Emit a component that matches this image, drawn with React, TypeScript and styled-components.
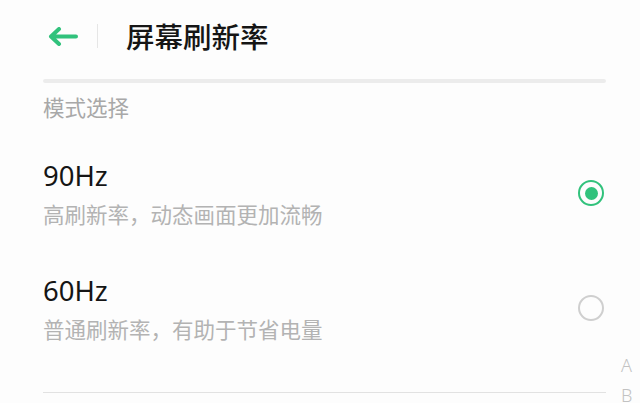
import React from "react";
import styled, { createGlobalStyle } from "styled-components";

const GREEN = "#31c27c";

const GlobalStyle = createGlobalStyle`
  html, body {
    margin: 0;
    padding: 0;
    background: #fdfdfd;
  }
  body {
    font-family: "Noto Sans CJK SC", "Noto Sans", sans-serif;
  }
`;

const Page = styled.div`
  position: relative;
  width: 640px;
  height: 403px;
  overflow: hidden;
  padding: 0 34px 0 43px;
  box-sizing: border-box;
`;

const Header = styled.div`
  display: flex;
  align-items: center;
  height: 72px;
`;

const BackButton = styled.div`
  display: flex;
  align-items: center;
  padding-left: 5px;
  width: 55px;
  height: 24px;
  box-sizing: border-box;
  border-right: 1px solid #e6e6e6;
`;

const Title = styled.h1`
  margin: 0 0 0 28px;
  font-size: 28.5px;
  line-height: 36px;
  font-weight: 500;
  color: #151515;
`;

const Bar = styled.div`
  margin-top: 7px;
  height: 4px;
  border-radius: 2px;
  background: #ececec;
`;

const SectionLabel = styled.div`
  margin-top: 9px;
  font-size: 21.5px;
  line-height: 30px;
  color: #a8a8a8;
`;

const List = styled.div`
  margin-top: 15px;
`;

const Item = styled.div`
  display: flex;
  align-items: center;
  justify-content: space-between;
  padding: 22px 2px 23px 0;
`;

const ItemText = styled.div`
  display: flex;
  flex-direction: column;
  gap: 6px;
`;

const ItemTitle = styled.div`
  font-family: "Noto Sans", "Noto Sans CJK SC", sans-serif;
  font-size: 27.5px;
  line-height: 34px;
  color: #151515;
`;

const ItemSub = styled.div`
  font-size: 21.5px;
  line-height: 30px;
  color: #b3b3b3;
`;

const Radio = styled.div<{ $checked: boolean }>`
  width: 26px;
  height: 26px;
  margin-bottom: 2px;
  box-sizing: border-box;
  border-radius: 50%;
  border: ${(p) => (p.$checked ? `2.5px solid ${GREEN}` : "2px solid #cfcfcf")};
  display: flex;
  align-items: center;
  justify-content: center;

  &::after {
    content: "";
    width: 13px;
    height: 13px;
    border-radius: 50%;
    background: ${(p) => (p.$checked ? GREEN : "transparent")};
  }
`;

const Divider = styled.div`
  margin-top: 25px;
  height: 1px;
  background: #e2e2e2;
`;

const IndexBar = styled.div`
  position: absolute;
  left: 621px;
  top: 350px;
  display: flex;
  flex-direction: column;
  font-family: "Noto Sans", sans-serif;
  font-weight: 300;
  font-size: 18px;
  line-height: 30px;
  color: #c2c2c2;
`;

const modes = [
  { hz: "90Hz", desc: "高刷新率，动态画面更加流畅", checked: true },
  { hz: "60Hz", desc: "普通刷新率，有助于节省电量", checked: false },
];

export default function App() {
  return (
    <>
      <GlobalStyle />
      <Page>
        <Header>
          <BackButton>
            <svg width="30" height="19" viewBox="0 0 30 19" fill="none">
              <path
                d="M28 9.5H3M11 2L3 9.5L11 17"
                stroke={GREEN}
                strokeWidth="4"
                strokeLinecap="round"
                strokeLinejoin="round"
              />
            </svg>
          </BackButton>
          <Title>屏幕刷新率</Title>
        </Header>
        <Bar />
        <SectionLabel>模式选择</SectionLabel>
        <List>
          {modes.map((m) => (
            <Item key={m.hz}>
              <ItemText>
                <ItemTitle>{m.hz}</ItemTitle>
                <ItemSub>{m.desc}</ItemSub>
              </ItemText>
              <Radio $checked={m.checked} />
            </Item>
          ))}
        </List>
        <Divider />
        <IndexBar>
          <span>A</span>
          <span>B</span>
        </IndexBar>
      </Page>
    </>
  );
}
